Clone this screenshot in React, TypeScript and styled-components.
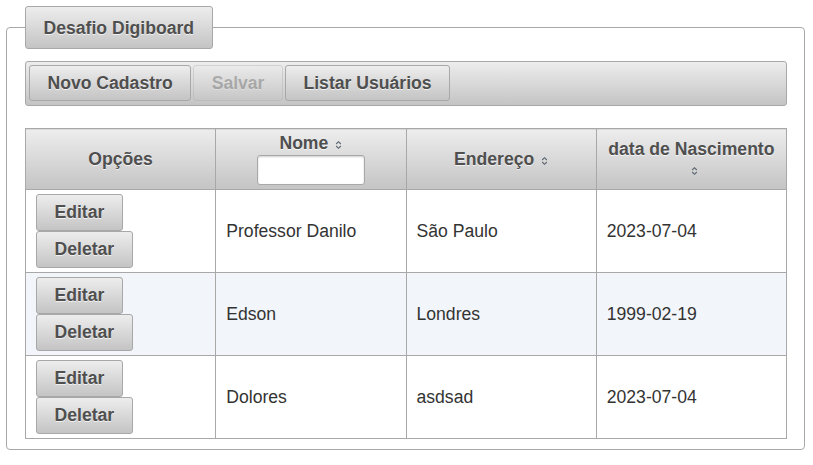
import React from "react";
import styled, { createGlobalStyle, css } from "styled-components";

const Global = createGlobalStyle`
  html, body { margin: 0; padding: 0; background: #ffffff; }
  body { font-family: "Liberation Sans", Arial, sans-serif; }
`;

const gradient = css`
  background: linear-gradient(to bottom, #ededed 0%, #c4c4c4 100%);
  border: 1px solid #a8a8a8;
  color: #4f4f4f;
  text-shadow: 0 1px 0 rgba(255, 255, 255, 0.7);
`;

const Fieldset = styled.fieldset`
  margin: 6px 8px 0 6px;
  padding: 12px 17px 10px 18px;
  border: 1px solid #a8a8a8;
  border-radius: 4px;
  min-width: 0;
`;

const Legend = styled.legend`
  ${gradient};
  padding: 0 17.5px;
  height: 41px;
  line-height: 42px;
  font-size: 17.6px;
  font-weight: bold;
  border-radius: 3px;
`;

const Toolbar = styled.div`
  ${gradient};
  border-radius: 3px;
  padding: 3px 3px 4px;
  display: flex;
  gap: 2px;
  margin-bottom: 22px;
`;

const Button = styled.button<{ $disabled?: boolean; $tall?: boolean }>`
  ${gradient};
  font-family: "Liberation Sans", Arial, sans-serif;
  font-size: 17.6px;
  font-weight: bold;
  height: ${(p) => (p.$tall ? 37 : 36)}px;
  padding: 0 17.5px;
  border-radius: 3px;
  cursor: pointer;
  ${(p) =>
    p.$disabled &&
    css`
      opacity: 0.35;
      cursor: default;
    `}
`;

const Table = styled.table`
  width: 100%;
  border-collapse: collapse;
  table-layout: fixed;
  font-size: 17.6px;
`;

const Th = styled.th`
  ${gradient};
  height: 61px;
  box-sizing: border-box;
  padding: 3px 10px 4px;
  font-weight: bold;
  text-align: center;
  vertical-align: middle;
  line-height: 20px;
`;

const Row = styled.tr<{ $odd?: boolean }>`
  background: ${(p) => (p.$odd ? "#f2f5f9" : "#ffffff")};
`;

const Td = styled.td`
  border: 1px solid #a8a8a8;
  height: 83px;
  box-sizing: border-box;
  padding: 4px 10px;
  color: #333333;
  vertical-align: middle;
`;

const Actions = styled.div`
  display: flex;
  flex-direction: column;
  align-items: flex-start;
`;

const Filter = styled.input`
  display: block;
  margin: 2px auto 0;
  width: 108px;
  height: 30px;
  box-sizing: border-box;
  border: 1px solid #a8a8a8;
  border-radius: 3px;
  background: #ffffff;
  box-shadow: inset 0 1px 2px rgba(0, 0, 0, 0.2);
  outline: none;
`;

const SortIcon = styled.svg`
  display: inline-block;
  width: 7px;
  height: 10px;
  margin-left: 7px;
  vertical-align: -1px;
`;

const Sort = () => (
  <SortIcon viewBox="0 0 7 10">
    <path d="M1.2 4 L3.5 1.7 L5.8 4 M1.2 6 L3.5 8.3 L5.8 6" fill="none" stroke="#5a6570" strokeWidth="1.1" />
  </SortIcon>
);

const rows = [
  { nome: "Professor Danilo", end: "São Paulo", data: "2023-07-04" },
  { nome: "Edson", end: "Londres", data: "1999-02-19" },
  { nome: "Dolores", end: "asdsad", data: "2023-07-04" },
];

export default function App() {
  return (
    <>
      <Global />
      <Fieldset>
        <Legend>Desafio Digiboard</Legend>
        <Toolbar>
          <Button>Novo Cadastro</Button>
          <Button $disabled>Salvar</Button>
          <Button>Listar Usuários</Button>
        </Toolbar>
        <Table>
          <thead>
            <tr>
              <Th>Opções</Th>
              <Th>
                Nome
                <Sort />
                <Filter />
              </Th>
              <Th>
                Endereço
                <Sort />
              </Th>
              <Th>
                data de Nascimento
                <Sort />
              </Th>
            </tr>
          </thead>
          <tbody>
            {rows.map((r, i) => (
              <Row key={i} $odd={i % 2 === 1}>
                <Td>
                  <Actions>
                    <Button $tall>Editar</Button>
                    <Button $tall>Deletar</Button>
                  </Actions>
                </Td>
                <Td>{r.nome}</Td>
                <Td>{r.end}</Td>
                <Td>{r.data}</Td>
              </Row>
            ))}
          </tbody>
        </Table>
      </Fieldset>
    </>
  );
}
